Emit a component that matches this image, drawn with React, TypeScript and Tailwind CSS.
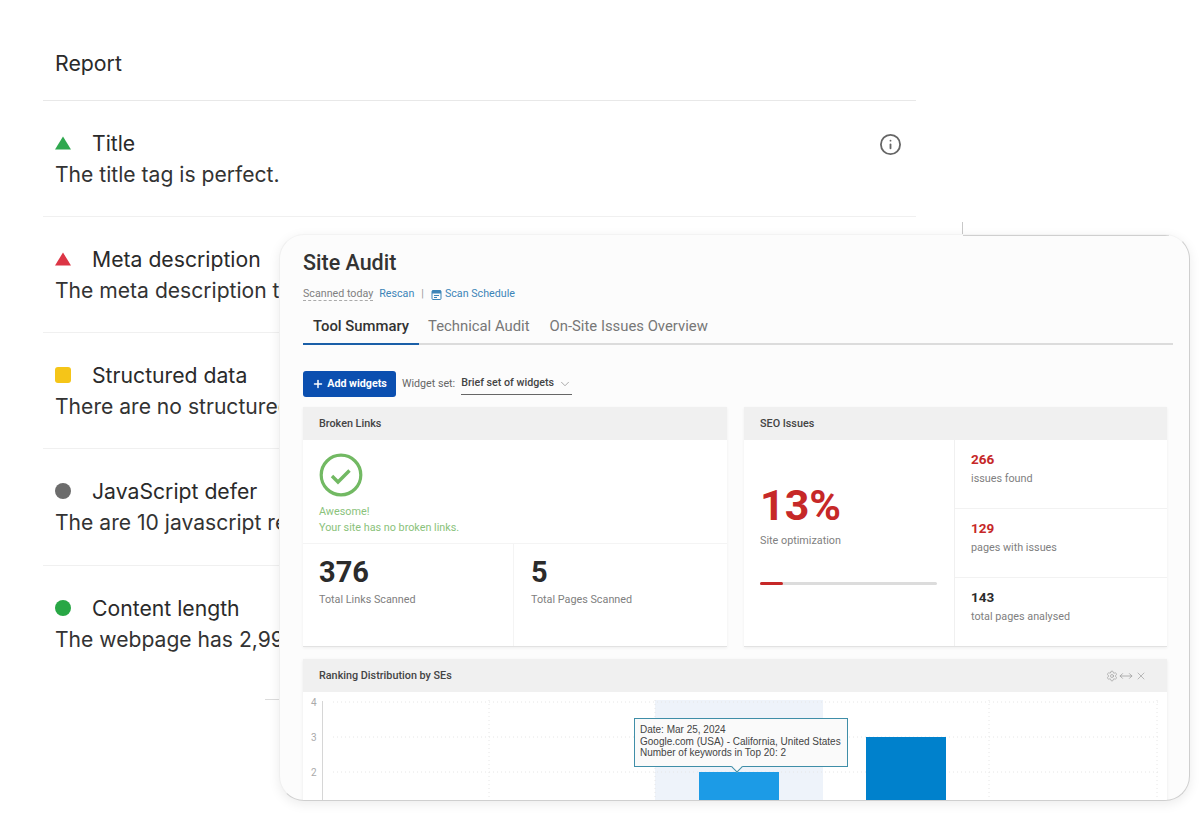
import { ChevronDown, Info, MoveHorizontal, Plus, Settings, X } from 'lucide-react';

const reportRows = [
  { shape: 'triangle-green', title: 'Title', text: 'The title tag is perfect.' },
  { shape: 'triangle-red', title: 'Meta description', text: 'The meta description t' },
  { shape: 'square', title: 'Structured data', text: 'There are no structured' },
  { shape: 'gray', title: 'JavaScript defer', text: 'The are 10 javascript re' },
  { shape: 'green', title: 'Content length', text: 'The webpage has 2,99' },
];

function StatusMark({ shape }: { shape: string }) {
  if (shape === 'triangle-green' || shape === 'triangle-red') {
    return (
      <svg width="16" height="14" viewBox="0 0 16 14" className="shrink-0">
        <path d="M8 0.5 L16 13.5 H0 Z" fill={shape === 'triangle-green' ? '#2fa84f' : '#dc3545'} />
      </svg>
    );
  }
  if (shape === 'square') return <span className="w-4 h-4 rounded-[3px] bg-[#f5c518] shrink-0" />;
  if (shape === 'gray') return <span className="w-4 h-4 rounded-full bg-[#6c6c6c] shrink-0" />;
  return <span className="w-4 h-4 rounded-full bg-[#28a745] shrink-0" />;
}

function CardHeader({ title, children }: { title: string; children?: React.ReactNode }) {
  return (
    <div className="h-[33px] shrink-0 bg-[#f0f0f0] pl-[16px] pr-5 flex items-center justify-between">
      <span className="pt-[2px] text-[10.8px] font-medium text-[#444]">{title}</span>
      {children}
    </div>
  );
}

function IssueRow({ value, label, red }: { value: string; label: string; red?: boolean }) {
  return (
    <div className="flex-1 pl-[16px] pt-[11px] border-b border-[#f2f2f2] last:border-b-0">
      <div className={red ? 'text-[13.5px] leading-4 font-bold text-[#c62828]' : 'text-[13.5px] leading-4 font-bold text-[#2b2b2b]'}>{value}</div>
      <div className="mt-[4px] text-[10.8px] leading-4 text-[#808080]">{label}</div>
    </div>
  );
}

export default function App() {
  return (
    <div className="relative w-[1200px] h-[815px] overflow-hidden bg-white font-['Inter',sans-serif] text-[#2a2a2a]">
      {/* Report behind the window */}
      <div className="w-[873px] ml-[43px]">
        <div className="h-[101px] border-b border-[#e8e8e8] pl-3 pt-[49px] text-[21.3px] leading-[29px]">Report</div>
        {reportRows.map((row) => (
          <div key={row.title} className="relative h-[116.15px] border-b border-[#f0f0f0] last:border-b-0 pl-3 pt-[27px]">
            <div className="flex items-center gap-[21px] h-[30px]">
              <StatusMark shape={row.shape} />
              <span className="text-[21.2px] leading-[30px] font-normal">{row.title}</span>
            </div>
            <div className="mt-[2px] text-[21.1px] leading-[30px] text-[#333] whitespace-nowrap">{row.text}</div>
            {row.title === 'Title' && (
              <Info className="absolute right-[14px] top-[32px] w-[23px] h-[23px] text-[#666]" strokeWidth={1.9} />
            )}
          </div>
        ))}
      </div>

      {/* Leftover edge lines of the screenshot frame */}
      <div className="absolute left-[962px] top-[222px] h-[12px] w-px bg-[#c8c8c8]" />
      <div className="absolute left-[265px] top-[699px] h-px w-[14px] bg-[#dcdcdc]" />

      {/* Site Audit window */}
      <div className="absolute left-[279px] top-[234px] w-[911px] h-[567px] overflow-hidden rounded-[25px] border border-t-[#f3f3f3] border-l-[#efefef] border-r-[#cfcfcf] border-b-[#cfcfcf] bg-[#fcfcfc] shadow-[0_3px_12px_rgba(0,0,0,0.08)] pl-[23px] pt-[15px] font-['Roboto',sans-serif]">
        <div className="absolute left-[683px] right-[20px] top-0 h-px bg-[#cfcfcf]" />
        <div className="text-[21.5px] leading-[26px] font-medium text-[#333]">Site Audit</div>
        <div className="mt-[10px] h-4 flex items-center text-[10.7px] text-[#3d85b8]">
          <span className="text-[#808080] border-b border-dashed border-[#aaa] leading-[13px]">Scanned today</span>
          <span className="ml-[6px]">Rescan</span>
          <span className="mx-[7px] text-[#999]">|</span>
          <svg width="11" height="11" viewBox="0 0 11 11" className="mr-[3px]">
            <rect x="1" y="1.5" width="9" height="9" rx="1" fill="none" stroke="#3d85b8" />
            <rect x="1" y="1.5" width="9" height="3" fill="#3d85b8" />
            <rect x="3" y="6" width="5" height="1" fill="#3d85b8" />
            <rect x="3" y="8" width="3" height="1" fill="#3d85b8" />
          </svg>
          <span>Scan Schedule</span>
        </div>
        <div className="mt-[4px] w-[870px] h-[39px] border-b-2 border-[#dcdcdc] flex text-[14.85px] text-[#777]">
          <div className="h-[39px] w-[116px] pt-[4px] border-b-2 border-[#1a5fa8] flex items-center justify-center font-medium text-[#333]">Tool Summary</div>
          <div className="h-[37px] pt-[4px] ml-[9px] flex items-center">Technical Audit</div>
          <div className="h-[37px] pt-[4px] ml-[20px] flex items-center">On-Site Issues Overview</div>
        </div>

        <div className="mt-[26px] h-[26px] flex items-center text-[10.7px]">
          <button className="h-[26px] w-[93px] rounded-[3px] bg-[#0b4fb0] text-white font-bold flex items-center justify-center gap-[3px]">
            <Plus className="w-[12px] h-[12px]" strokeWidth={3} />
            Add widgets
          </button>
          <span className="ml-[6px] text-[#666]">Widget set:</span>
          <div className="ml-[6px] h-[22px] w-[111px] border-b border-[#666] flex items-center justify-between text-[#444] font-medium">
            Brief set of widgets
            <ChevronDown className="w-[14px] h-[14px] text-[#888]" strokeWidth={1.2} />
          </div>
        </div>

        <div className="mt-[10px] w-[864px] grid grid-cols-[424px_423px] gap-x-[17px] gap-y-[12px]">
          {/* Broken Links */}
          <div className="h-[240px] bg-white flex flex-col border-b border-[#e2e2e2] shadow-[0_1px_3px_rgba(0,0,0,0.06)]">
            <CardHeader title="Broken Links" />
            <div className="h-[104px] shrink-0 pl-[16px] pt-[13px] border-b border-[#f4f4f4]">
              <svg width="44" height="44" viewBox="0 0 44 44">
                <circle cx="22" cy="22" r="19.8" fill="none" stroke="#72b963" strokeWidth="3.2" />
                <path d="M13 23 L19 29 L30.5 17.5" fill="none" stroke="#72b963" strokeWidth="3.4" />
              </svg>
              <div className="mt-[7px] text-[10.8px] leading-4 text-[#8ac27b]">Awesome!</div>
              <div className="text-[10.8px] leading-4 text-[#8ac27b]">Your site has no broken links.</div>
            </div>
            <div className="flex-1 grid grid-cols-[211px_1fr]">
              <div className="pl-[16px] pt-[11px] border-r border-[#f4f4f4]">
                <div className="text-[29px] leading-[34px] font-bold text-[#2b2b2b]">376</div>
                <div className="mt-[3px] text-[10.8px] leading-4 text-[#808080]">Total Links Scanned</div>
              </div>
              <div className="pl-[17px] pt-[11px]">
                <div className="text-[29px] leading-[34px] font-bold text-[#2b2b2b]">5</div>
                <div className="mt-[3px] text-[10.8px] leading-4 text-[#808080]">Total Pages Scanned</div>
              </div>
            </div>
          </div>

          {/* SEO Issues */}
          <div className="h-[240px] bg-white flex flex-col border-b border-[#e2e2e2] shadow-[0_1px_3px_rgba(0,0,0,0.06)]">
            <CardHeader title="SEO Issues" />
            <div className="flex-1 grid grid-cols-[211px_1fr]">
              <div className="pl-[16px] pt-[37px] border-r border-[#f0f0f0]">
                <div className="text-[43px] leading-[56px] font-bold text-[#c62828]">13%</div>
                <div className="text-[10.8px] leading-4 text-[#808080]">Site optimization</div>
                <div className="mt-[33px] w-[177px] h-[3px] rounded-full bg-[#dcdcdc]">
                  <div className="w-[23px] h-[3px] rounded-full bg-[#c62828]" />
                </div>
              </div>
              <div className="flex flex-col">
                <IssueRow value="266" label="issues found" red />
                <IssueRow value="129" label="pages with issues" red />
                <IssueRow value="143" label="total pages analysed" />
              </div>
            </div>
          </div>

          {/* Ranking Distribution */}
          <div className="col-span-2 h-[200px] bg-white flex flex-col shadow-[0_1px_3px_rgba(0,0,0,0.08)]">
            <CardHeader title="Ranking Distribution by SEs">
              <div className="flex items-center gap-[1px] text-[#999]">
                <Settings className="w-[12px] h-[12px]" strokeWidth={1.3} />
                <MoveHorizontal className="w-[14px] h-[14px]" strokeWidth={1.3} />
                <X className="w-[12px] h-[12px] ml-[1px]" strokeWidth={1.3} />
              </div>
            </CardHeader>
            <div className="relative flex-1">
              <svg width="864" height="110" viewBox="0 0 864 110" className="block">
                <rect x="352" y="8" width="168" height="102" fill="#eef3fa" />
                <g stroke="#e6e6e6" strokeDasharray="1 3">
                  <line x1="30" y1="10" x2="855" y2="10" />
                  <line x1="30" y1="45" x2="855" y2="45" />
                  <line x1="30" y1="80" x2="855" y2="80" />
                  <line x1="186" y1="8" x2="186" y2="110" />
                  <line x1="352" y1="8" x2="352" y2="110" />
                  <line x1="686" y1="8" x2="686" y2="110" />
                  <line x1="854" y1="8" x2="854" y2="110" />
                </g>
                <line x1="19.5" y1="9" x2="19.5" y2="110" stroke="#d6d6d6" />
                <g fill="#aaa" fontSize="10" fontFamily="Roboto, sans-serif">
                  <text x="8" y="14">4</text>
                  <text x="8" y="49">3</text>
                  <text x="8" y="84">2</text>
                </g>
                <rect x="396" y="80" width="80" height="30" fill="#1c9be6" />
                <rect x="563" y="45" width="80" height="65" fill="#0081cc" />
              </svg>
              {/* Tooltip over the bars */}
              <div className="absolute left-[331px] top-[26px] w-[214px] h-[49px] border border-[#3f8ea8] bg-[#fafafa] px-[5px] pt-[5px] font-['Liberation_Sans',sans-serif] text-[10px] leading-[11.6px] text-[#444] whitespace-nowrap">
                <div>Date: Mar 25, 2024</div>
                <div>Google.com (USA) - California, United States</div>
                <div>Number of keywords in Top 20: 2</div>
                <div className="absolute left-[98px] bottom-[-5px] w-2 h-2 rotate-45 bg-[#fafafa] border-r border-b border-[#3f8ea8]" />
              </div>
            </div>
          </div>
        </div>
      </div>
    </div>
  );
}
